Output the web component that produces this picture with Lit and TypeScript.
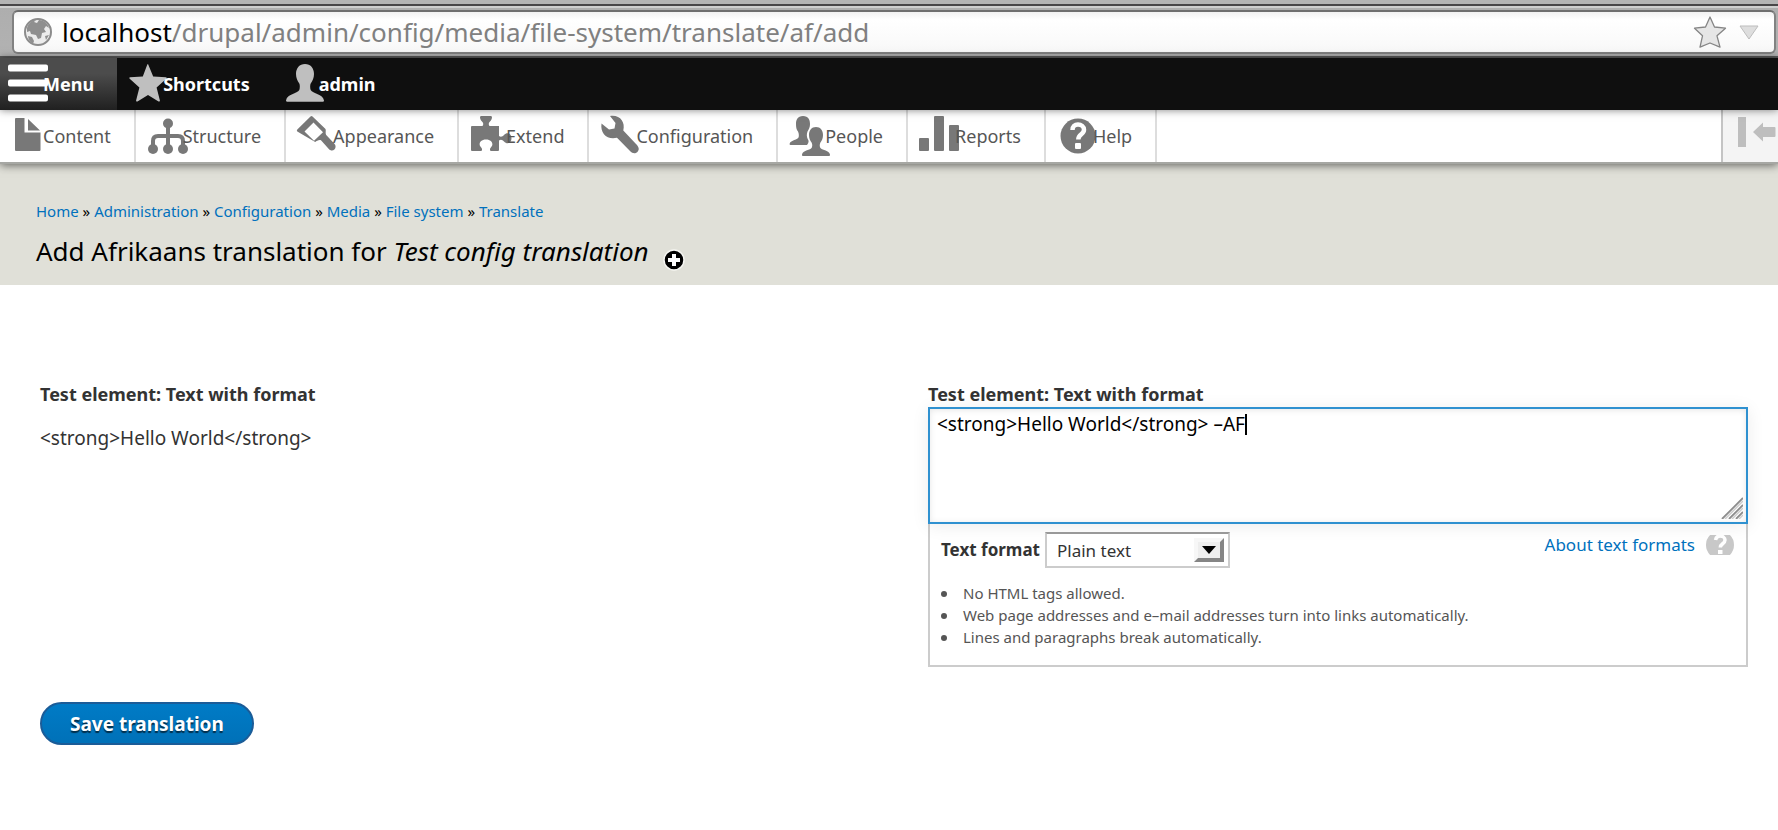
import { LitElement, html, svg, css } from "lit";
import { customElement, state } from "lit/decorators.js";

const icons = {
  menu: svg`<path d="M10 6.500h36a2 2 0 0 1 2 2v3a2 2 0 0 1-2 2h-36a2 2 0 0 1-2-2v-3a2 2 0 0 1 2-2zM10 21.500h36a2 2 0 0 1 2 2v3a2 2 0 0 1-2 2h-36a2 2 0 0 1-2-2v-3a2 2 0 0 1 2-2zM10 36.500h36a2 2 0 0 1 2 2v3a2 2 0 0 1-2 2h-36a2 2 0 0 1-2-2v-3a2 2 0 0 1 2-2z"/>`,
  star: svg`<path d="M31 6l5.200 12.600 12.800.6c.8.200.9 1 .3 1.600L39.600 29.500l3.300 13c.1 1-.6 1.400-1.400.9L31 37 20.500 43.400c-.8.500-1.500.1-1.400-.9l3.300-13L12.700 20.800c-.6-.6-.5-1.400.3-1.600l12.800-.6L30.300 6.500z"/>`,
  user: svg`<path d="M32 6c5.500 0 9 4 9 10 0 4-1.500 7-3.300 9.500-.7 1-.7 5 0 6.500 2 3.500 12.300 4 13.300 10.500 0 .8-.4 1.200-1 1.200H14c-.6 0-1-.4-1-1.200C14 36 24.300 35.500 26.300 32c.7-1.500.7-5.500 0-6.500C24.500 23 23 20 23 16c0-6 3.500-10 9-10z"/>`,
  content: svg`<path d="M20 8h8.500v14.500H44.500V40a1 1 0 0 1-1 1h-23.500a1 1 0 0 1-1-1V9a1 1 0 0 1 1-1zM32 9l12 11.500H32z"/>`,
  structure: svg`<circle cx="32" cy="13.500" r="5"/><circle cx="17" cy="39" r="5"/><circle cx="32" cy="39" r="5"/><circle cx="47" cy="39" r="5"/><path d="M32 14v24M17 38v-7q0-5 5-5h20q5 0 5 5v7" fill="none" stroke="#787878" stroke-width="4"/>`,
  appearance: svg`<path d="M24.500 6.500q1-1 2 0L39.500 19c.8 1.500-.5 4 .7 6l8 8.500c2 2 1.700 4.500.2 6-1.600 1.500-4 1.300-5.600-.5l-7.600-8.500c-2-1.200-4.500.8-6 1.500L11.300 21.500q-1-1 0-2zM27.500 12.500 18.500 21.500 28 30.700 37 22.300z" fill-rule="evenodd"/>`,
  extend: svg`<path d="M13 16h10.500c1-1.500 1.200-3-.5-4.500-1.500-1.500-3-5-1-5.500h10c2 .5.500 4-1 5.500-1.700 1.500-1.500 3-.5 4.500H40v10c2 1.500 3.500.5 5-1 3-3.500 7.500-1.500 7.500 3.300s-4.500 6.700-7.500 3.200c-1.500-1.500-3-2.500-5-1V40a1 1 0 0 1-1 1h-7.500c-1-1.500-.6-2.800.7-4 2.500-2.300 1.200-7.500-5.200-7.500s-7.700 5.200-5.200 7.500c1.300 1.200 1.700 2.500.7 4H13a1 1 0 0 1-1-1V17a1 1 0 0 1 1-1z"/>`,
  config: svg`<path d="M21 6c10-1.500 15.500 6 13.300 14.500L47 34c3 3 3.600 5.500 1.600 7.700s-5 2-7.600-.7L28 27.700C18.500 30 11 24 12.500 13.500l7.500 6 5.500-1 1-5.500z"/>`,
  people: svg`<path d="M25 6c5.500 0 7 4 7 8 0 3-1 5.300-2.500 7.500-1 3-.8 5 .2 7.500 1.300 1.500 1.300 3.500-.7 6H12.500c-1 0-1-1-.8-1.500 1-3.500 8.300-3.500 9-6.500.4-2 0-4-.7-5.500-1.600-2-2-4.500-2-7.500 0-4 1.500-8 7-8z"/><path d="M38 17c4.500 0 7 3.500 7 8 0 3-1 5.500-2.700 7.700-.8 2-.8 4.300.4 5.600 2 2 8.300 2 9.300 6.200 0 1-.3 1.500-1.300 1.500H25.300c-1 0-1.300-.5-1.300-1.500 1-4.200 7.300-4.200 9.300-6.200 1.200-1.300 1.200-3.600.4-5.600C32 30.500 31 28 31 25c0-4.500 2.500-8 7-8z" stroke="#fff" stroke-width="2" paint-order="stroke"/>`,
  reports: svg`<rect x="11" y="28" width="10" height="13" rx="1"/><rect x="26" y="6" width="10" height="35" rx="1"/><rect x="41" y="15" width="10" height="26" rx="1"/>`,
  help: svg`<circle cx="32" cy="26" r="17.500"/><path d="M26.500 20c0-3.500 2.300-5.500 5.500-5.500s6 2 6 5.200c0 4.800-5.700 4.300-5.700 9.800" fill="none" stroke="#fff" stroke-width="4.500"/><rect x="29" y="33" width="6" height="6" rx="1" fill="#fff"/>`,
};

const toolbarTabs = [
  { label: "Menu", icon: icons.menu, active: true },
  { label: "Shortcuts", icon: icons.star, active: false },
  { label: "admin", icon: icons.user, active: false },
];

const trayItems = [
  { label: "Content", icon: icons.content },
  { label: "Structure", icon: icons.structure },
  { label: "Appearance", icon: icons.appearance },
  { label: "Extend", icon: icons.extend },
  { label: "Configuration", icon: icons.config },
  { label: "People", icon: icons.people },
  { label: "Reports", icon: icons.reports },
  { label: "Help", icon: icons.help },
];

const crumbs = ["Home", "Administration", "Configuration", "Media", "File system", "Translate"];

const formatTips = [
  "No HTML tags allowed.",
  "Web page addresses and e\u2013mail addresses turn into links automatically.",
  "Lines and paragraphs break automatically.",
];

@customElement("address-bar")
class AddressBar extends LitElement {
  static styles = css`
    :host {
      display: block;
      background: #b4b4b4;
      padding-top: 4px;
    }
    .chrome {
      border-top: 2px solid #484648;
      border-bottom: 2px solid #5a5a5a;
      background: linear-gradient(#cfcfcf, #cfcfcf 2px, #aeaeae 2px, #b2b2b2);
      padding: 4px 2px 2px 12px;
    }
    .field {
      box-sizing: border-box;
      display: flex;
      align-items: center;
      height: 44px;
      padding: 0 15px 0 10px;
      border: 2px solid #828282;
      border-top-color: #6e6e6e;
      border-radius: 6px;
      background: linear-gradient(#f1f1f1, #fff 8px, #f8f8f8);
    }
    .url {
      flex: 1;
      padding-left: 10px;
      font-size: 26px;
      line-height: 36px;
      color: #808080;
    }
    .host {
      color: #000;
    }
    .globe {
      width: 28px;
      height: 28px;
    }
    .star {
      width: 34px;
      height: 34px;
      margin-right: 12px;
    }
    .drop {
      width: 20px;
      height: 16px;
    }
  `;

  render() {
    return html`
      <div class="chrome">
        <div class="field">
          <svg class="globe" viewBox="0 0 28 28">
            <circle cx="14" cy="14" r="13" fill="#ececec" stroke="#8c8c8c" stroke-width="2" />
            <path
              d="M3 10c1-4 5-8 9-8l-2 2 3 1 2-3c5 0 9 4 10 8l-3-2-2 3 2 3-4 1-1 5-3 1-2-4-5-1-1-3-3 1zM4 18l4 1 2 4-1 3c-3-2-5-5-5-8zM21 18l4-1-3 5z"
              fill="#8f8f8f"
            />
          </svg>
          <div class="url"><span class="host">localhost</span>/drupal/admin/config/media/file-system/translate/af/add</div>
          <svg class="star" viewBox="0 0 34 34">
            <path
              d="M17 2l4.500 10 11 1.200-8.500 7.600 3 11.400L17 28 7 32.200l2.500-11.400L1.500 13.200l11-1.200z"
              fill="#e6e6e6"
              stroke="#858585"
              stroke-width="1.300"
              stroke-linejoin="round"
            />
          </svg>
          <svg class="drop" viewBox="0 0 20 16">
            <path d="M1 2h18L10 15z" fill="#dedede" stroke="#bdbdbd" />
          </svg>
        </div>
      </div>
    `;
  }
}

@customElement("admin-toolbar")
class AdminToolbar extends LitElement {
  static styles = css`
    :host {
      display: block;
      font-size: 18px;
    }
    .bar,
    .tray {
      position: relative;
      display: flex;
      height: 52px;
    }
    .bar {
      z-index: 2;
      background: #0f0f0f;
      box-shadow: 0 0 8px rgba(0, 0, 0, 0.5);
    }
    .tray {
      z-index: 1;
      background: #fff;
      border-bottom: 2px solid #a6a7a3;
      box-shadow: 0 1px 9px rgba(0, 0, 0, 0.6);
    }
    .item {
      display: flex;
      align-items: center;
      padding-right: 23px;
      line-height: 52px;
      text-decoration: none;
    }
    .icon {
      flex: none;
      width: 56px;
      height: 52px;
      margin-right: -9px;
    }
    .bar .item {
      color: #fff;
      font-weight: bold;
      fill: #bfbfbf;
    }
    .bar .icon {
      margin-right: -10px;
    }
    .bar .active {
      background: linear-gradient(#4c4c4c 30%, #202020);
      fill: #fff;
    }
    .bar .active .icon {
      margin-right: -13px;
    }
    .tray .item {
      color: #565656;
      fill: #787878;
      border-right: 2px solid #ddd;
    }
    .tray .item:first-child .icon {
      margin-left: -4px;
    }
    .label {
      position: relative;
    }
    .toggle {
      width: 57px;
      margin-left: auto;
      padding: 0;
      border: 0;
      border-left: 2px solid #c4c4c4;
      background: #f4f4f4;
    }
    .toggle svg {
      display: block;
      width: 55px;
      height: 52px;
      fill: #bebebe;
    }
  `;

  render() {
    return html`
      <nav class="bar" aria-label="Toolbar">
        ${toolbarTabs.map(
          (t) => html`<a class="item ${t.active ? "active" : ""}" href="#"
            ><svg class="icon" viewBox="0 0 56 52">${t.icon}</svg><span class="label">${t.label}</span></a
          >`
        )}
      </nav>
      <nav class="tray" aria-label="Administration menu">
        ${trayItems.map(
          (t) => html`<a class="item" href="#"
            ><svg class="icon" viewBox="0 0 56 52">${t.icon}</svg><span class="label">${t.label}</span></a
          >`
        )}
        <button class="toggle" type="button" aria-label="Vertical orientation">
          <svg viewBox="0 0 55 52">
            <path d="M15 7h8v30h-8zM30 22l10-9.500v4.500h11.500a1 1 0 0 1 1 1v8a1 1 0 0 1-1 1H40v4.500z" />
          </svg>
        </button>
      </nav>
    `;
  }
}

@customElement("page-header")
class PageHeader extends LitElement {
  static styles = css`
    :host {
      display: block;
      padding: 36px 36px 14px;
      background: #e0e0d8;
    }
    .crumbs {
      font-size: 15px;
      line-height: 22px;
    }
    a {
      color: #0071bd;
      text-decoration: none;
    }
    .title-row {
      display: flex;
      align-items: center;
      gap: 14px;
      margin-top: 9px;
    }
    h1 {
      margin: 0;
      font-size: 26px;
      font-weight: normal;
      line-height: 36px;
    }
    .add {
      margin-top: 18px;
      padding: 0;
      border: 0;
      background: none;
    }
    .add svg {
      display: block;
      width: 22px;
      height: 22px;
    }
  `;

  render() {
    return html`
      <nav class="crumbs" aria-label="Breadcrumb">
        ${crumbs.map((c, i) => html`${i ? " » " : ""}<a href="#">${c}</a>`)}
      </nav>
      <div class="title-row">
        <h1>Add Afrikaans translation for <em>Test config translation</em></h1>
        <button class="add" type="button" aria-label="Add to shortcuts">
          <svg viewBox="0 0 22 22">
            <circle cx="11" cy="11" r="10" stroke="#f6f6f2" stroke-width="1.500" />
            <path d="M11 5v12M5 11h12" stroke="#fff" stroke-width="4" />
          </svg>
        </button>
      </div>
    `;
  }
}

@customElement("translation-form")
class TranslationForm extends LitElement {
  @state() private text = "<strong>Hello World</strong> \u2013AF";

  static styles = css`
    :host {
      display: block;
      padding: 96px 30px 40px 40px;
      color: #333;
      font-size: 19px;
    }
    .columns {
      display: grid;
      grid-template-columns: 888fr 820fr;
    }
    .label {
      display: block;
      margin: 0;
      font-size: 18px;
      font-weight: bold;
      line-height: 26px;
    }
    .source {
      margin: 18px 0 0;
      line-height: 26px;
    }
    .editor {
      position: relative;
    }
    .text,
    .mirror {
      box-sizing: border-box;
      width: 100%;
      height: 117px;
      padding: 2px 7px;
      border: 2px solid #2f91d0;
      font: inherit;
      line-height: 26px;
    }
    .text {
      display: block;
      position: relative;
      color: #000;
      background: #fff;
      outline: none;
      resize: none;
      caret-color: transparent;
      box-shadow: 0 2px 16px rgba(0, 0, 0, 0.08), inset 0 1px 6px rgba(0, 0, 0, 0.1);
    }
    .mirror {
      position: absolute;
      inset: 0;
      border-color: transparent;
      white-space: pre-wrap;
      pointer-events: none;
      color: transparent;
    }
    .caret {
      display: inline-block;
      width: 2px;
      height: 21px;
      vertical-align: -4px;
      background: #000;
    }
    .grip {
      position: absolute;
      right: 5px;
      bottom: 5px;
      width: 22px;
      height: 22px;
      pointer-events: none;
    }
    .format {
      padding: 8px 12px 17px 11px;
      border: 2px solid #ccc;
      border-top: 0;
    }
    .format-row {
      display: flex;
      align-items: flex-start;
      gap: 5px;
      font-size: 17px;
    }
    .format-label {
      font-weight: bold;
      line-height: 36px;
    }
    .select-wrap {
      position: relative;
    }
    select {
      appearance: none;
      box-sizing: border-box;
      width: 185px;
      height: 36px;
      padding: 0 40px 0 10px;
      border: 2px solid #ccc;
      border-top-color: #999;
      border-radius: 0;
      background: #fff;
      color: #333;
      font: inherit;
    }
    .arrow {
      position: absolute;
      right: 6px;
      top: 6px;
      width: 30px;
      height: 24px;
      pointer-events: none;
    }
    .about {
      display: flex;
      align-items: center;
      gap: 11px;
      margin-left: auto;
      color: #0071bd;
      line-height: 26px;
      text-decoration: none;
    }
    .about svg {
      width: 28px;
      height: 20px;
    }
    .tips {
      margin: 14px 0 0;
      padding: 0 0 0 22px;
      list-style: none;
      color: #555;
      font-size: 15px;
      line-height: 22px;
    }
    .tips li::before {
      content: "";
      display: inline-block;
      width: 6px;
      height: 6px;
      margin: 0 16px 2px -22px;
      border-radius: 50%;
      background: #555;
    }
    .save {
      height: 43px;
      margin-top: 35px;
      padding: 0 28px;
      border: 2px solid #1b5c98;
      border-radius: 22px;
      background: linear-gradient(#007bc6, #0071b8);
      color: #fff;
      font: inherit;
      font-weight: bold;
      text-shadow: 0 2px 1px rgba(0, 0, 0, 0.6);
    }
  `;

  private onInput(e: Event) {
    this.text = (e.target as HTMLTextAreaElement).value;
  }

  render() {
    return html`
      <form @submit=${(e: Event) => e.preventDefault()}>
        <div class="columns">
          <section>
            <h2 class="label">Test element: Text with format</h2>
            <p class="source">&lt;strong&gt;Hello World&lt;/strong&gt;</p>
          </section>
          <section>
            <label class="label" for="text">Test element: Text with format</label>
            <div class="editor">
              <textarea class="text" id="text" .value=${this.text} @input=${this.onInput}></textarea>
              <div class="mirror" aria-hidden="true">${this.text}<span class="caret"></span></div>
              <svg class="grip" viewBox="0 0 22 22">
                <path d="M1 22 22 1M8 22 22 8M15 22l7-7" stroke="#8d8d8d" stroke-width="1.800" fill="none" />
                <path d="M4 22 22 4M11 22l11-11M18 22l4-4" stroke="#ccc" stroke-width="1.500" fill="none" />
              </svg>
            </div>
            <div class="format">
              <div class="format-row">
                <label class="format-label" for="format">Text format</label>
                <div class="select-wrap">
                  <select id="format">
                    <option>Plain text</option>
                  </select>
                  <svg class="arrow" viewBox="0 0 30 24">
                    <path d="M0 0h30L26 4v16H4L0 24z" fill="#f7f7f7" />
                    <path d="M30 0v24H0l4-4h22V4z" fill="#858585" />
                    <path d="M4 4h22v16H4z" fill="#eee" />
                    <path d="M8 8h14l-7 8z" fill="#000" />
                  </svg>
                </div>
                <a class="about" href="#"
                  >About text formats<svg viewBox="0 0 28 20">
                    <circle cx="14" cy="10" r="14" fill="#c8c8c8" />
                    <path d="M9.500 5C10 2 11.500 1 14 1s5 1.500 5 4c0 4-4.700 3.500-4.700 7.500" fill="none" stroke="#fff" stroke-width="3.500" />
                    <path d="M12 15h4.500v4H12z" fill="#fff" />
                  </svg></a
                >
              </div>
              <ul class="tips">
                ${formatTips.map((tip) => html`<li>${tip}</li>`)}
              </ul>
            </div>
          </section>
        </div>
        <button class="save" type="submit">Save translation</button>
      </form>
    `;
  }
}

@customElement("app-root")
class AppRoot extends LitElement {
  static styles = css`
    :host {
      display: block;
      min-height: 100vh;
      background: #fff;
      color: #000;
      font-family: "Noto Sans", "Open Sans", sans-serif;
    }
  `;

  render() {
    return html`
      <address-bar></address-bar>
      <admin-toolbar></admin-toolbar>
      <page-header></page-header>
      <translation-form></translation-form>
    `;
  }
}
